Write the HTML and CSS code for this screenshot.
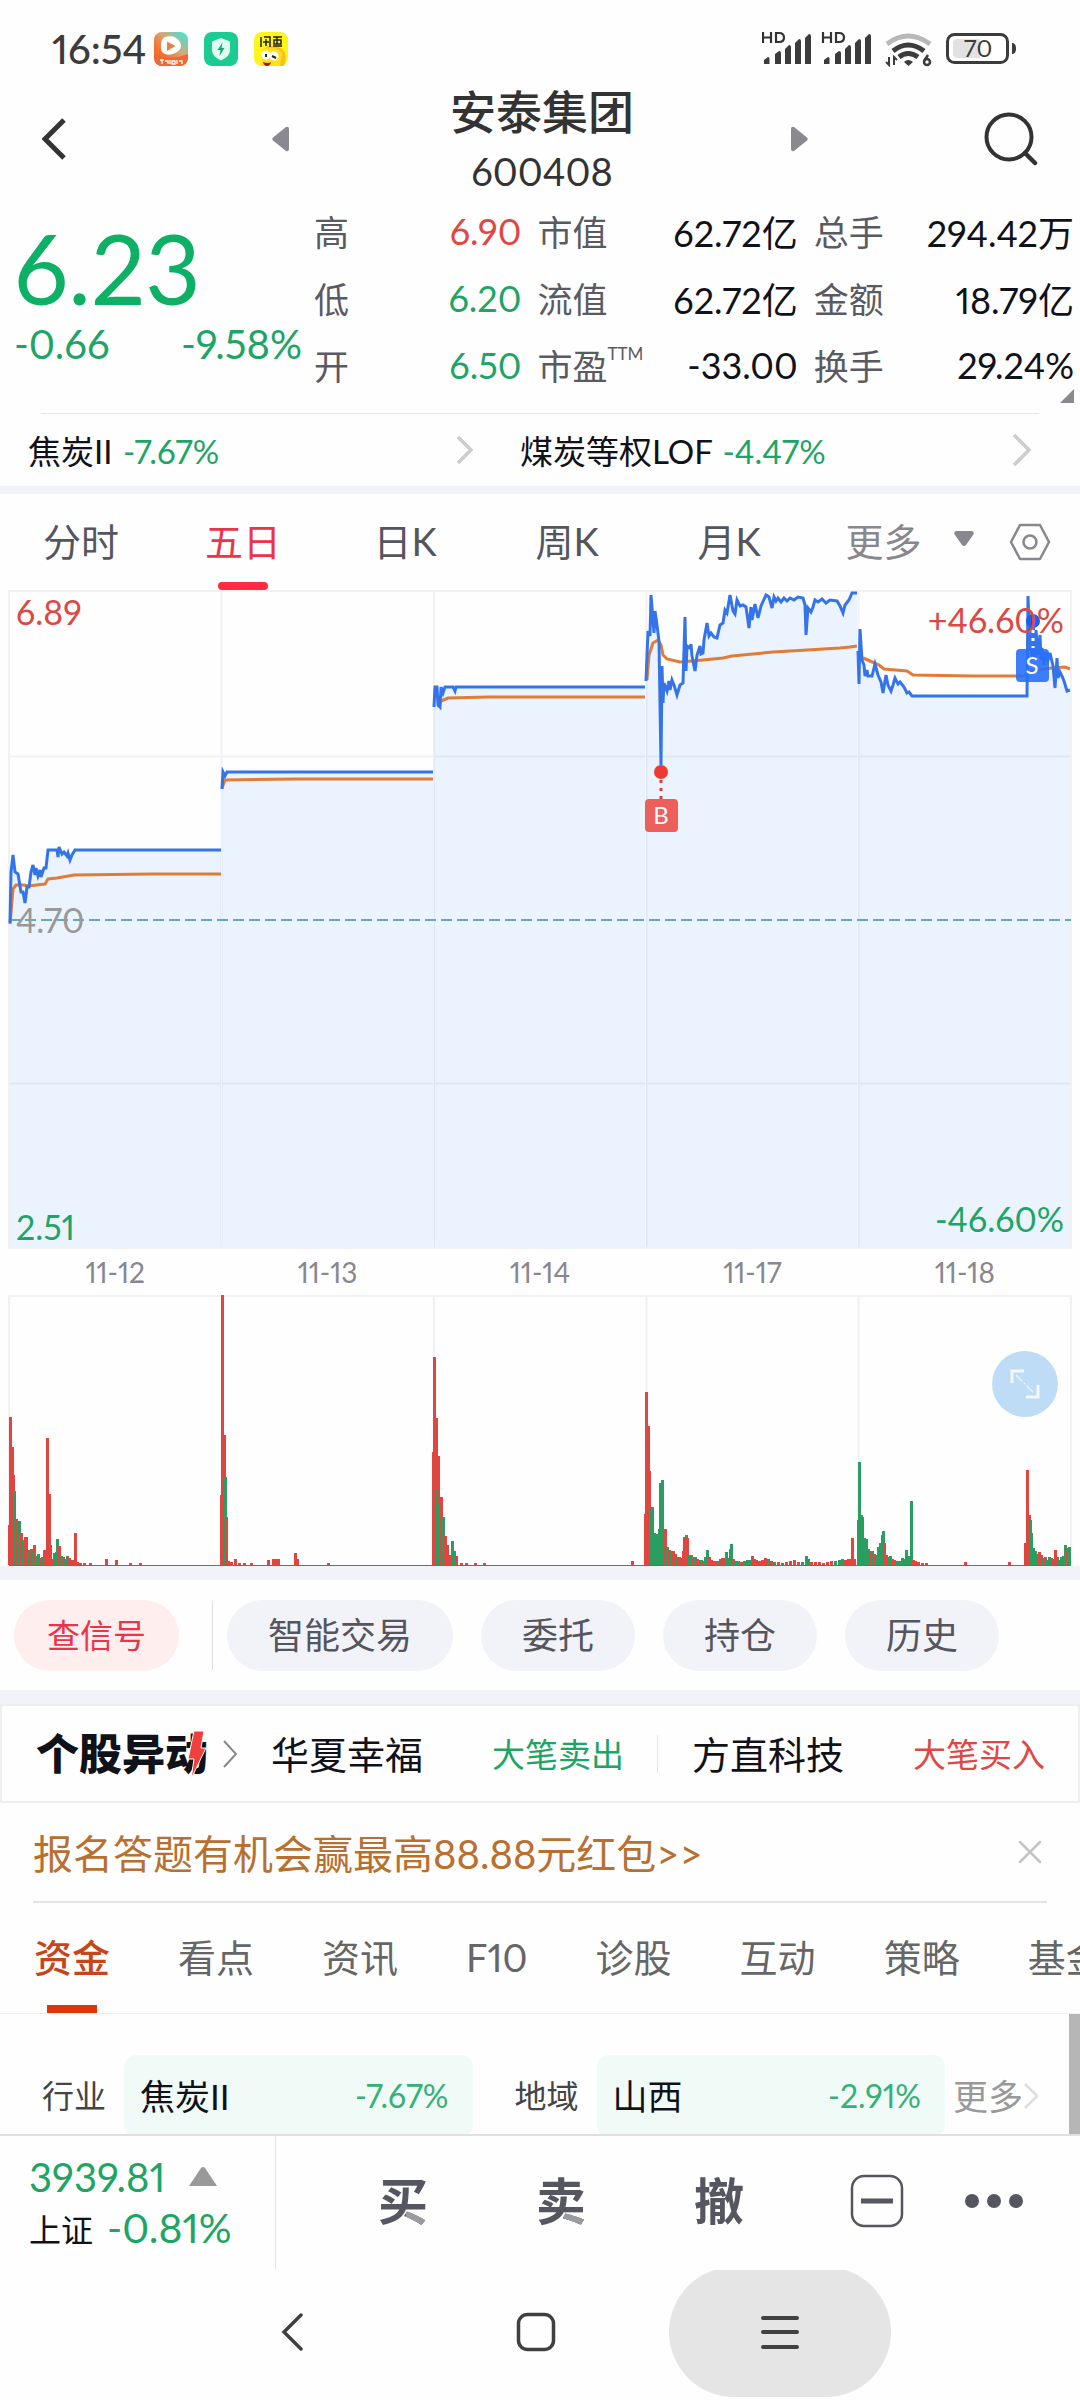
FILE: index.html
```html
<!DOCTYPE html>
<html lang="zh-CN">
<head>
  <meta charset="UTF-8">
  <meta name="viewport" content="width=device-width, initial-scale=1.0">
  <title>安泰集团 600408</title>
  <link rel="stylesheet" href="styles.css">
</head>
<body>
  <!-- Status bar -->
  <div class="status-bar">
    <span class="clock">16:54</span>
    <div class="app-icons">
      <svg width="34" height="34" viewBox="0 0 34 34">
        <defs>
          <linearGradient id="videoBg" x1="0" y1="1" x2="1" y2="0">
            <stop offset="0.3" stop-color="#f4702e"/>
            <stop offset="0.6" stop-color="#d9a878"/>
            <stop offset="0.85" stop-color="#62d6c0"/>
          </linearGradient>
        </defs>
        <rect width="34" height="34" rx="8" fill="url(#videoBg)"/>
        <path d="M0 22q17 7 34 0v4a8 8 0 0 1-8 8H8a8 8 0 0 1-8-8z" fill="#ee6a35"/>
        <path d="M11 5q10-3 15 5 3 6-3 10-6 4-12 2-5-2-4-9 0-6 4-8z" fill="#fff"/>
        <path d="M13 9.500l8.500 4.500-8.500 5z" fill="#e8813f"/>
        <path d="M6 28h4M8 28v4M11 29h3v3M16 28v4M18 29h3v3h-3zM23 28v4M25 29h3v3" stroke="#fff" stroke-width="1.300" fill="none"/>
      </svg>
      <svg width="34" height="34" viewBox="0 0 34 34">
        <rect width="34" height="34" rx="8" fill="#1bcb92"/>
        <path d="M17 6l9 3.500v9q0 6-9 10-9-4-9-10v-9z" fill="#dffff1"/>
        <path d="M18.500 10.500l-5 7.500h3l-1 6 5-8h-3z" fill="#14a878"/>
      </svg>
      <svg width="34" height="34" viewBox="0 0 34 34">
        <rect width="34" height="34" rx="8" fill="#fdf51c"/>
        <path d="M12 15q10-3 17 3 5 6 1 16H10z" fill="#fbc11a"/>
        <path d="M8 17q14-4 20 4l-2 13H8z" fill="#ffe01c"/>
        <circle cx="12" cy="23" r="4.500" fill="#fff"/>
        <circle cx="20" cy="24" r="4.500" fill="#fff"/>
        <path d="M12 22v3M18 24l4 2" stroke="#222" stroke-width="2"/>
        <path d="M9 30q5 2 8 0-1 4-4 4t-4-4z" fill="#a01818"/>
        <path d="M7 5v10M10 5h6v10M12 7v7M9 10h6M19 5h9M20 8h7v4h-7zM23 5v7M19 14h9" stroke="#222" stroke-width="1.500" fill="none"/>
      </svg>
    </div>
    <div class="signals">
      <svg width="254" height="36" viewBox="0 0 254 36">
        <g id="signal">
          <path d="M1 1v11M1 6.500h8M9 1v11" stroke="#333" stroke-width="2.200" fill="none"/>
          <path d="M14 2v9h3q5 0 5-4.500T17 2z" stroke="#333" stroke-width="2.200" fill="none"/>
          <path d="M2 33v-4l4-3q1.500 0 1.500 1.500V33zM13 33V23l4-3q2 0 2 2v11zM23 33V18l4-4q2 0 2 2v17zM33 33V12l4-4q2 0 2 2v23zM43 33V7l4-4q2 0 2 2v28z" fill="#3c3c3c"/>
        </g>
        <use href="#signal" x="60"/>
        <g fill="none" stroke-width="5">
          <path d="M125 13q21-16 43 0" stroke="#b8b8b8"/>
          <path d="M131 20q15-12 31 0" stroke="#3c3c3c"/>
          <path d="M137 26q9-7 19 0" stroke="#3c3c3c"/>
        </g>
        <path d="M142 31q4-4 9 0l-4.500 4z" fill="#3c3c3c"/>
        <path d="M127 26v8l-3-3M132 34v-8l3 3" stroke="#3c3c3c" stroke-width="2" fill="none"/>
        <path d="M166 24l-4 6" stroke="#3c3c3c" stroke-width="2.500"/>
        <circle cx="165" cy="31" r="3" stroke="#3c3c3c" stroke-width="2.500" fill="none"/>
        <rect x="185.500" y="3.500" width="60" height="28" rx="7" fill="#fff" stroke="#3c3c3c" stroke-width="3"/>
        <path d="M196 8h22v19h-22q-5 0-5-4V12q0-4 5-4z" fill="#e2e2e2"/>
        <path d="M250 12q4 0 4 5.500t-4 5.500z" fill="#3c3c3c"/>
        <text x="216" y="26" class="battery-text">70</text>
      </svg>
    </div>
  </div>

  <!-- Stock header -->
  <header class="header">
    <button class="icon-btn back-btn" aria-label="返回">
      <svg width="26" height="42" viewBox="0 0 26 42"><path d="M22 2L3 21l19 19" fill="none" stroke="#333" stroke-width="5"/></svg>
    </button>
    <button class="icon-btn" aria-label="上一只">
      <svg width="18" height="26" viewBox="0 0 18 26"><path d="M14 1q3-1 3 2v20q0 3-3 2L1 14.500q-1.500-1.500 0-3z" fill="#8a8990"/></svg>
    </button>
    <div class="stock-title">
      <h1 class="stock-name">安泰集团</h1>
      <div class="stock-code">600408</div>
    </div>
    <button class="icon-btn" aria-label="下一只">
      <svg width="18" height="26" viewBox="0 0 18 26"><path d="M4 1Q1 0 1 3v20q0 3 3 2l13-10.500q1.500-1.500 0-3z" fill="#8a8990"/></svg>
    </button>
    <button class="icon-btn search-btn" aria-label="搜索">
      <svg width="54" height="54" viewBox="0 0 54 54"><circle cx="25" cy="25" r="22.500" fill="none" stroke="#333" stroke-width="4"/><path d="M41 41l10 10" stroke="#333" stroke-width="4.500" stroke-linecap="round"/></svg>
    </button>
  </header>

  <!-- Quote -->
  <section class="quote">
    <div class="quote-main down">
      <div class="price">6.23</div>
      <div class="change"><span>-0.66</span><span>-9.58%</span></div>
    </div>
    <div class="stats">
      <div class="stat"><span class="label">高</span><span class="up">6.90</span></div>
      <div class="stat"><span class="label">市值</span><span>62.72亿</span></div>
      <div class="stat"><span class="label">总手</span><span>294.42万</span></div>
      <div class="stat"><span class="label">低</span><span class="down">6.20</span></div>
      <div class="stat"><span class="label">流值</span><span>62.72亿</span></div>
      <div class="stat"><span class="label">金额</span><span>18.79亿</span></div>
      <div class="stat"><span class="label">开</span><span class="down">6.50</span></div>
      <div class="stat"><span class="label">市盈<sup>TTM</sup></span><span>-33.00</span></div>
      <div class="stat"><span class="label">换手</span><span>29.24%</span></div>
    </div>
    <span class="corner"></span>
  </section>

  <!-- Related indexes -->
  <nav class="related">
    <a class="related-link" href="#">
      <span>焦炭II <b class="down">-7.67%</b></span>
      <svg width="18" height="30" viewBox="0 0 18 30"><path d="M2 2l13 13L2 28" fill="none" stroke="#ccc" stroke-width="3.500"/></svg>
    </a>
    <a class="related-link" href="#">
      <span>煤炭等权LOF <b class="down">-4.47%</b></span>
      <svg width="20" height="34" viewBox="0 0 20 34"><path d="M2 2l15 15L2 32" fill="none" stroke="#ccc" stroke-width="3.500"/></svg>
    </a>
  </nav>

  <div class="band thin"></div>

  <!-- Chart period tabs -->
  <nav class="period-tabs">
    <button class="period">分时</button>
    <button class="period active">五日</button>
    <button class="period">日K</button>
    <button class="period">周K</button>
    <button class="period">月K</button>
    <button class="period more">更多
      <svg width="20" height="16" viewBox="0 0 20 16"><path d="M2 0h16q3 1 1 4l-7 10q-2 2-4 0L1 4q-2-3 1-4z" fill="#88878e"/></svg>
    </button>
    <button class="period setting" aria-label="设置">
      <svg width="42" height="38" viewBox="0 0 42 38"><path d="M11 2h20l9 17-9 17H11L2 19z" fill="none" stroke="#88878e" stroke-width="2.500" stroke-linejoin="round"/><circle cx="21" cy="19" r="6.500" fill="none" stroke="#88878e" stroke-width="2.500"/></svg>
    </button>
  </nav>

  <!-- Price chart -->
  <svg class="chart" viewBox="0 0 1080 659">
    <g id="priceArea" fill="#ebf3fe"></g>
    <path class="grid" d="M9 1h1062v657H9zM221.500 1v657M434 1v657M646.500 1v657M858.500 1v657M9 166.500h1062M9 493.500h1062"/>
    <path d="M9 330h1062" stroke="#6aa5b8" stroke-width="2" stroke-dasharray="11 5"/>
    <g id="avgLines" class="avg-line"></g>
    <g id="priceLines" class="price-line"></g>
    <circle cx="661" cy="182" r="7" fill="#ee3a32"/>
    <path d="M661 190v19" stroke="#d9413d" stroke-width="3" stroke-dasharray="3 5"/>
    <rect x="645" y="209" width="33" height="33" rx="4" fill="#ec5f5b"/>
    <text class="mark" x="661" y="234">B</text>
    <text class="axis axis-up" x="16" y="35">6.89</text>
    <text class="axis axis-mid" x="16" y="343">4.70</text>
    <text class="axis axis-down" x="16" y="650">2.51</text>
    <circle cx="1033" cy="31" r="7" fill="#1a5ff0"/>
    <path d="M1033 40v18" stroke="#fff" stroke-width="3" stroke-dasharray="3 5"/>
    <rect x="1016" y="59" width="33" height="33" rx="4" fill="#2a70fa" opacity="0.900"/>
    <text class="mark" x="1032" y="84">S</text>
    <text class="axis axis-up end" x="1064" y="43">+46.60%</text>
    <text class="axis axis-down end" x="1064" y="642">-46.60%</text>
  </svg>

  <div class="dates">
    <span>11-12</span><span>11-13</span><span>11-14</span><span>11-17</span><span>11-18</span>
  </div>

  <!-- Volume chart -->
  <div class="volume">
    <svg class="chart" viewBox="0 0 1080 271">
      <path class="grid" d="M9 270V1h1062v269M221.500 1v269M434 1v269M646.500 1v269M858.500 1v269"/>
      <g id="volumeBars"></g>
      <path d="M9 270.500h1062" stroke="#d0453f" stroke-width="1"/>
    </svg>
    <button class="expand-btn" aria-label="全屏">
      <svg width="32" height="32" viewBox="0 0 32 32"><path d="M3 15V3h12M17 29h12V17" fill="none" stroke="#fff" stroke-opacity="0.800" stroke-width="3"/><path d="M7 7l18 18" stroke="#fff" stroke-opacity="0.800" stroke-width="1.200" stroke-dasharray="9 2 2 2"/></svg>
    </button>
  </div>

  <div class="band"></div>

  <!-- Trade shortcuts -->
  <div class="shortcuts">
    <button class="pill pill-red">查信号</button>
    <span class="divider"></span>
    <button class="pill">智能交易</button>
    <button class="pill">委托</button>
    <button class="pill">持仓</button>
    <button class="pill">历史</button>
  </div>

  <div class="band"></div>

  <!-- Unusual moves ticker -->
  <section class="movers">
    <a class="movers-logo" href="#">个股异动
      <svg class="bolt" width="18" height="50" viewBox="0 0 18 50"><path d="M6 1h10l-3 17h5L3 49l3-20H0z" fill="#f0403e" stroke="#fff" stroke-width="1"/></svg>
    </a>
    <svg width="16" height="30" viewBox="0 0 16 30"><path d="M2 2l12 13L2 28" fill="none" stroke="#888" stroke-width="2"/></svg>
    <a class="mover" href="#"><span>华夏幸福</span><em class="down">大笔卖出</em></a>
    <a class="mover" href="#"><span>方直科技</span><em class="up">大笔买入</em></a>
  </section>

  <div class="promo">
    <a href="#">报名答题有机会赢最高88.88元红包&gt;&gt;</a>
    <button class="icon-btn" aria-label="关闭">
      <svg width="24" height="24" viewBox="0 0 24 24"><path d="M2 2l20 20M22 2L2 22" stroke="#c4c4c4" stroke-width="2.500" stroke-linecap="round"/></svg>
    </button>
  </div>

  <!-- Info tabs -->
  <nav class="info-tabs">
    <a class="info-tab active" href="#">资金</a>
    <a class="info-tab" href="#">看点</a>
    <a class="info-tab" href="#">资讯</a>
    <a class="info-tab" href="#">F10</a>
    <a class="info-tab" href="#">诊股</a>
    <a class="info-tab" href="#">互动</a>
    <a class="info-tab" href="#">策略</a>
    <a class="info-tab" href="#">基金</a>
  </nav>

  <section class="sectors">
    <span class="sector-label">行业</span>
    <a class="sector" href="#"><span>焦炭II</span><span class="sector-change">-7.67%</span></a>
    <span class="sector-label">地域</span>
    <a class="sector" href="#"><span>山西</span><span class="sector-change">-2.91%</span></a>
    <a class="sector-more" href="#">更多
      <svg width="16" height="28" viewBox="0 0 16 28"><path d="M2 2l12 12L2 26" fill="none" stroke="#ddd" stroke-width="2.500"/></svg>
    </a>
    <span class="scrollbar"></span>
  </section>

  <!-- Bottom trade bar -->
  <footer class="trade-bar">
    <div class="market">
      <div class="market-row"><span class="market-value down">3939.81</span>
        <svg width="28" height="20" viewBox="0 0 28 20"><path d="M12 1q2-2 4 0l12 18H0z" fill="#999"/></svg>
      </div>
      <div class="market-row"><span class="market-name">上证</span><span class="market-change down">-0.81%</span></div>
    </div>
    <div class="actions">
      <button class="action"><span class="two-tone">买</span></button>
      <button class="action"><span class="two-tone">卖</span></button>
      <button class="action">撤</button>
      <button class="action" aria-label="减自选">
        <svg width="54" height="54" viewBox="0 0 54 54"><rect x="2" y="2" width="50" height="50" rx="12" fill="none" stroke="#55565f" stroke-width="2.500"/><path d="M11 27h32" stroke="#55565f" stroke-width="5"/></svg>
      </button>
      <button class="action dots" aria-label="更多">
        <svg width="60" height="16" viewBox="0 0 60 16"><g fill="#55565f"><circle cx="8" cy="8" r="7"/><circle cx="30" cy="8" r="7"/><circle cx="52" cy="8" r="7"/></g></svg>
      </button>
    </div>
  </footer>

  <!-- System navigation -->
  <nav class="system-nav">
    <button class="nav-btn" aria-label="后退">
      <svg width="22" height="38" viewBox="0 0 22 38"><path d="M20 2L3 19l17 17" fill="none" stroke="#404040" stroke-width="3.500" stroke-linecap="round"/></svg>
    </button>
    <button class="nav-btn" aria-label="主页">
      <svg width="40" height="40" viewBox="0 0 40 40"><rect x="2.500" y="2.500" width="35" height="35" rx="9" fill="none" stroke="#404040" stroke-width="3.500"/></svg>
    </button>
    <button class="nav-btn pressed" aria-label="任务">
      <svg width="38" height="36" viewBox="0 0 38 36"><path d="M2 4h34M2 18h34M2 33h34" stroke="#404040" stroke-width="4" stroke-linecap="round"/></svg>
    </button>
  </nav>

  <script src="script.js"></script>
</body>
</html>
```

FILE: styles.css
```css
* {
  margin: 0;
  padding: 0;
  box-sizing: border-box;
}

body {
  font-family: Lato, "Noto Sans CJK SC", sans-serif;
  font-variant-numeric: proportional-nums;
  background: #fefefe;
  color: #11111a;
  overflow-x: hidden;
}

button {
  border: none;
  background: none;
  font: inherit;
  color: inherit;
  cursor: pointer;
}

a {
  color: inherit;
  text-decoration: none;
}

svg {
  display: block;
  flex-shrink: 0;
}

.up {
  color: #e04743;
}

.down {
  color: #1ea566;
}

.band {
  height: 14px;
  background: #f2f3f8;
}

.band.thin {
  height: 8px;
}

/* Status bar */
.status-bar {
  display: flex;
  align-items: center;
  height: 80px;
  padding: 18px 64px 0 52px;
  color: #3c3c3c;
}

.clock {
  font-size: 40px;
  font-weight: 500;
}

.app-icons {
  display: flex;
  gap: 16px;
  margin-left: 8px;
}

.signals {
  margin-left: auto;
}

.battery-text {
  font-size: 24px;
  fill: #3c3c3c;
  text-anchor: middle;
}

/* Header */
.header {
  display: grid;
  grid-template-columns: 20% 12% 1fr 12% 20%;
  align-items: center;
  height: 117px;
  color: #333;
}

.icon-btn {
  display: flex;
  justify-content: center;
}

.back-btn {
  justify-content: flex-start;
  padding-left: 42px;
}

.search-btn {
  justify-content: flex-end;
  padding-right: 42px;
}

.stock-title {
  padding-left: 4px;
  text-align: center;
}

.stock-name {
  font-size: 46px;
  font-weight: 500;
  line-height: 64px;
}

.stock-code {
  font-size: 38px;
  line-height: 54px;
}

/* Quote */
.quote {
  position: relative;
  display: flex;
  height: 217px;
  padding: 0 6px 0 14px;
}

.quote::after {
  content: "";
  position: absolute;
  left: 41px;
  right: 41px;
  bottom: 0;
  height: 1px;
  background: #e8e8e8;
}

.quote-main {
  width: 300px;
}

.price {
  font-size: 96px;
  line-height: 98px;
  padding-top: 22px;
  color: #0db065;
}

.change {
  display: flex;
  justify-content: space-between;
  padding-right: 12px;
  font-size: 40px;
  line-height: 54px;
}

.stats {
  flex: 1;
  display: grid;
  grid-template-columns: 208fr 261fr 261fr;
  grid-auto-rows: 67px;
  column-gap: 16px;
}

.stat {
  display: flex;
  justify-content: space-between;
  align-items: center;
  font-size: 36px;
  white-space: nowrap;
}

.label {
  font-size: 35px;
  color: #5a5a62;
}

.label sup {
  font-size: 17px;
  line-height: 1px;
  vertical-align: 20px;
}

.corner {
  position: absolute;
  right: 6px;
  bottom: 11px;
  border-left: 14px solid transparent;
  border-bottom: 14px solid #8a8990;
}

/* Related indexes */
.related {
  display: grid;
  grid-template-columns: 1fr 1fr;
  height: 72px;
  font-size: 33px;
}

.related-link {
  display: flex;
  justify-content: space-between;
  align-items: center;
  padding: 0 66px 0 28px;
}

.related-link + .related-link {
  padding: 0 48px 0 0;
  margin-left: -20px;
}

.related b {
  margin-left: 2px;
  font-weight: 400;
}

/* Period tabs */
.period-tabs {
  display: flex;
  height: 96px;
  font-size: 38px;
  color: #55555e;
}

.period {
  position: relative;
  flex: 0 0 15%;
  padding-bottom: 6px;
}

.period.active {
  color: #e8354b;
}

.period.active::after {
  content: "";
  position: absolute;
  left: 50%;
  bottom: 0;
  width: 50px;
  height: 8px;
  margin-left: -25px;
  border-radius: 4px;
  background: #ff2a44;
}

.period.more {
  flex: 1;
  display: flex;
  align-items: center;
  justify-content: center;
  gap: 32px;
  color: #88878e;
}

.period.setting {
  flex: none;
  padding: 0 29px 0 0;
}

/* Charts */
.chart {
  width: 100%;
  height: auto;
}

.grid {
  fill: none;
  stroke: #8a93a5;
  stroke-opacity: 0.12;
  stroke-width: 2;
}

.price-line {
  fill: none;
  stroke: #3474e8;
  stroke-width: 3;
}

.avg-line {
  fill: none;
  stroke: #e07c38;
  stroke-width: 3;
}

.axis {
  font-size: 34px;
}

.axis-up {
  fill: #dc4945;
}

.axis-mid {
  fill: #999;
}

.axis-down {
  fill: #1ea566;
}

.end {
  text-anchor: end;
}

.mark {
  font-size: 24px;
  fill: #fff;
  text-anchor: middle;
}

.dates {
  display: grid;
  grid-template-columns: repeat(5, 1fr);
  padding: 0 9px;
  font-size: 28px;
  line-height: 46px;
  text-align: center;
  color: #88878e;
}

.volume {
  position: relative;
}

.expand-btn {
  position: absolute;
  top: 56px;
  right: 22px;
  width: 66px;
  height: 66px;
  border-radius: 50%;
  display: flex;
  align-items: center;
  justify-content: center;
  background: #bfdcf6;
}

/* Shortcuts */
.shortcuts {
  display: flex;
  align-items: center;
  gap: 28px;
  height: 110px;
  padding: 0 14px;
}

.pill {
  height: 71px;
  padding: 0 41px;
  border-radius: 36px;
  background: #f2f3f8;
  color: #55555e;
  font-size: 36px;
  line-height: 68px;
}

.pill-red {
  padding: 0 33px;
  background: #ffeeee;
  color: #e8354b;
  font-size: 33px;
}

.divider {
  width: 1px;
  height: 69px;
  margin: 0 -14px 0 5px;
  background: #ddd;
}

/* Movers */
.movers {
  display: flex;
  align-items: center;
  height: 99px;
  padding-left: 34px;
  border: 2px solid #eee;
}

.movers-logo {
  position: relative;
  margin-right: 14px;
  font-size: 43px;
  font-weight: 900;
  line-height: 64px;
}

.bolt {
  position: absolute;
  right: 2px;
  top: 8px;
}

.mover {
  flex: 1;
  display: flex;
  align-items: center;
  justify-content: space-between;
  margin: 0 33px;
  font-size: 38px;
  line-height: 38px;
}

.mover em {
  font-style: normal;
  font-size: 33px;
}

.mover + .mover {
  margin-left: 0;
  padding-left: 34px;
  border-left: 1px solid #e4e4e4;
}

/* Promo */
.promo {
  display: flex;
  align-items: center;
  justify-content: space-between;
  height: 100px;
  margin: 0 33px;
  padding-right: 5px;
  border-bottom: 2px solid #e4e4e4;
  font-size: 40px;
  color: #b87030;
}

/* Info tabs */
.info-tabs {
  display: flex;
  gap: 68px;
  height: 111px;
  padding-left: 34px;
  overflow: hidden;
  border-bottom: 1px solid #eee;
  font-size: 38px;
  line-height: 108px;
  white-space: nowrap;
  color: #666;
}

.info-tab {
  position: relative;
}

.info-tab.active {
  color: #c8451c;
  font-weight: 500;
}

.info-tab.active::after {
  content: "";
  position: absolute;
  left: 50%;
  bottom: 0;
  width: 50px;
  height: 8px;
  margin-left: -25px;
  background: #dc3706;
}

/* Sectors */
.sectors {
  position: relative;
  display: flex;
  align-items: flex-start;
  height: 120px;
  padding: 41px 41px 0 42px;
  overflow: hidden;
  line-height: 82px;
}

.sector-label {
  font-size: 32px;
  color: #444;
  margin-right: 18px;
}

.sector {
  flex: 1;
  display: flex;
  justify-content: space-between;
  height: 82px;
  padding: 0 24px 0 16px;
  border-radius: 12px;
  background: #f0fbf7;
  font-size: 35px;
}

.sector + .sector-label {
  margin-left: 42px;
}

.sector-change {
  font-size: 32px;
  color: #34b078;
}

.sector-more {
  display: flex;
  align-items: center;
  margin-left: 8px;
  font-size: 35px;
  color: #999;
}

.scrollbar {
  position: absolute;
  top: 0;
  right: 0;
  width: 11px;
  height: 100%;
  background: #b6b6b6;
}

/* Trade bar */
.trade-bar {
  display: flex;
  height: 136px;
  border-top: 2px solid #e0e0e0;
}

.market {
  width: 276px;
  padding: 15px 0 0 29px;
  border-right: 1px solid #e4e4e4;
}

.market-row {
  display: flex;
  align-items: center;
  height: 51px;
}

.market-value {
  margin-right: 24px;
  font-size: 40px;
}

.market-name {
  margin-right: 14px;
  font-size: 32px;
}

.market-change {
  font-size: 41px;
}

.actions {
  flex: 1;
  display: flex;
  align-items: center;
  padding: 0 56px 4px 48px;
}

.action {
  flex: 1;
  display: flex;
  justify-content: center;
  color: #55565f;
  font-size: 50px;
  font-weight: 700;
  line-height: 74px;
}

.action.dots {
  flex: none;
  margin-left: 8px;
}

/* The last stroke is drawn lighter than the rest of the character */
.two-tone {
  color: transparent;
  background: linear-gradient(#9b9ba0, #9b9ba0) 100% 86% / 22px 18px no-repeat, #55565f;
  background-clip: text;
  -webkit-background-clip: text;
}

/* System navigation */
.system-nav {
  display: flex;
  justify-content: center;
  gap: 22px;
  height: 130px;
  padding-right: 8px;
  overflow: hidden;
}

.nav-btn {
  width: 222px;
  height: 130px;
  margin-top: -3px;
  display: flex;
  align-items: center;
  justify-content: center;
  border-radius: 65px;
}

.nav-btn.pressed {
  background: #e5e5e5;
}
```

FILE: script.js
```js
const SVG_NS = 'http://www.w3.org/2000/svg';
const BOTTOM = 657;

// One "x,y" polyline per trading day
const prices = [
  '10,333 11,282 13,265 15,282 18,284 21,302 23,302 25,313 27,297 29,297 31,282 33,275 35,285 36,278 38,286 40,280 41,287 44,278 46,278 48,260 57,260 58,267 59,257 62,264 64,262 67,266 68,263 70,270 72,265 75,260 221,260',
  '222,199 223,182 225,186 227,182 433,182',
  '434,117 435,97 437,97 438,115 440,117 441,97 443,103 445,97 453,97 455,101 456,97 645,97',
  '646,91 648,41 650,46 651,5 654,43 655,21 657,35 659,51 661,175 662,76 663,113 664,93 667,101 669,91 670,100 672,90 674,95 677,105 680,95 683,93 685,27 686,81 687,56 690,58 691,54 692,66 695,81 697,65 700,56 701,64 703,63 704,50 707,33 709,46 711,43 714,47 717,48 720,35 723,33 725,20 727,23 730,5 733,21 735,24 737,10 740,16 743,15 746,17 749,38 751,17 752,30 755,14 758,28 761,16 766,5 769,7 772,18 774,7 776,11 778,8 781,12 784,8 787,11 790,8 794,10 798,7 803,8 805,15 806,45 808,18 811,22 813,17 815,10 818,12 822,9 826,13 830,10 837,11 840,16 843,23 845,15 849,10 852,3 857,3',
  '858,61 859,94 860,39 862,70 864,75 865,86 867,80 868,86 872,86 875,74 878,85 881,92 883,103 886,85 888,95 891,101 893,95 895,88 898,94 900,92 904,97 907,103 909,102 912,106 1027,106 1028,6 1030,60 1031,30 1032,66 1033,28 1035,70 1036,40 1038,65 1040,45 1041,70 1042,58 1044,75 1046,62 1048,70 1050,63 1053,76 1055,98 1057,68 1058,88 1060,82 1062,86 1064,91 1067,101 1070,100'
];

const averages = [
  '10,334 13,299 16,295 24,295 28,296 45,294 48,289 57,288 74,285 152,284 221,284',
  '222,198 225,190 296,189 433,189',
  '439,116 441,111 448,108 489,107 645,107',
  '647,90 649,65 653,53 658,50 661,55 663,65 667,69 680,72 703,70 723,68 732,66 753,64 773,62 807,60 840,58 850,57 857,56',
  '863,68 870,71 879,75 884,79 907,81 913,85 973,86 1023,86 1033,80 1053,78 1065,77 1070,79'
];

// x, height, direction (r = up, g = down)
const volumes = `
  9,40,r 10,148,r 12,118,r 13,90,r 14,74,g 16,46,r 18,44,g 19,44,g 21,32,r 23,25,g 25,28,r 26,28,r 28,15,g 30,13,g 31,16,r 33,14,g 34,20,r 36,9,g
  38,11,g 40,7,r 42,8,g 44,15,r 46,11,r 47,127,r 49,71,r 50,20,r 52,6,r 54,12,g 56,13,r 57,26,g 59,19,r 61,9,g 63,8,r 65,6,g 67,9,g 69,7,r 71,5,r 73,5,r 75,32,r 77,3,r 80,2,r
  84,2,r 90,2,r 106,6,r 116,5,r 130,2,r 140,2,r
  221,70,r 222,270,r 224,130,r 225,88,g 226,48,r 228,4,r 231,3,r 235,6,r 239,2,r 244,2,r 251,2,r 268,5,r 273,6,r 276,6,r 278,6,r 295,12,r 297,6,r 328,2,r
  433,113,r 434,208,r 436,147,r 437,75,g 438,109,r 439,61,g 441,68,r 443,48,g 445,29,r 447,20,r 449,10,r 452,24,g 454,14,g 456,9,r 461,2,r 466,2,r 475,2,r 484,2,r
  632,4,r 645,51,r 646,173,r 648,139,r 649,94,r 650,56,g 652,58,g 654,32,g 656,31,g 657,26,g 659,36,g 660,82,g 662,85,g 664,36,r 665,36,r 667,18,g 669,15,r 671,14,g 673,14,r
  675,11,r 677,8,g 679,8,r 681,7,r 683,14,r 684,28,r 686,30,g 687,27,r 689,10,g 691,10,g 693,8,r 695,8,g 697,6,r 699,5,r 701,5,g 703,4,r 705,8,g 707,15,g 709,8,r 711,5,r 713,4,r
  715,4,r 718,4,g 720,6,r 722,7,r 724,7,r 726,13,g 728,7,g 730,16,g 731,21,g 733,6,r 735,4,g 738,4,g 741,3,r 744,4,g 747,5,g 750,5,g 752,9,r 754,6,r 756,5,r 759,4,r 762,5,r 765,7,r
  768,6,g 771,4,r 774,3,g 778,3,r 782,2,g 786,3,r 790,4,r 794,5,r 798,3,r 802,3,g 806,9,g 808,6,g 811,3,r 815,3,r 819,3,r 823,2,r 827,3,r 831,4,r 835,4,g 839,5,g 842,6,g 845,5,r
  848,6,r 850,6,r 852,27,r 854,6,r
  858,45,g 859,103,g 861,50,g 862,48,g 864,27,g 866,26,g 868,16,g 870,14,r 872,14,g 874,11,r 876,10,g 878,18,g 880,22,g 882,30,g 883,34,g 884,22,r 886,10,r 888,8,g 890,9,g 892,6,r
  894,5,r 896,4,g 899,4,g 902,7,g 904,6,g 906,15,g 908,9,g 910,6,r 911,64,g 913,5,r 915,4,r 918,3,r 922,2,r 926,2,r 965,3,r 1009,3,r
  1025,22,r 1027,95,r 1029,50,r 1030,45,g 1031,32,g 1033,17,g 1035,14,g 1037,11,g 1039,13,r 1041,10,r 1043,7,g 1045,8,r 1047,5,g 1049,8,g 1051,7,g 1053,6,r 1055,15,r 1057,8,r
  1059,5,g 1061,8,g 1063,9,g 1065,20,g 1067,16,r 1068,17,g 1069,18,g`;

function add(parentId, tag, attrs) {
  const el = document.createElementNS(SVG_NS, tag);
  Object.keys(attrs).forEach(key => el.setAttribute(key, attrs[key]));
  document.getElementById(parentId).appendChild(el);
}

prices.forEach(points => {
  const list = points.split(' ');
  const first = list[0].split(',')[0];
  const last = list[list.length - 1].split(',')[0];
  add('priceArea', 'polygon', { points: `${first},${BOTTOM} ${points} ${last},${BOTTOM}` });
  add('priceLines', 'polyline', { points });
});

averages.forEach(points => add('avgLines', 'polyline', { points }));

volumes.trim().split(/\s+/).forEach(item => {
  const [x, height, dir] = item.split(',');
  add('volumeBars', 'rect', {
    x: x - 1,
    y: 270 - height,
    width: 3,
    height,
    fill: dir === 'r' ? '#e0453f' : '#2a9d60'
  });
});
```
